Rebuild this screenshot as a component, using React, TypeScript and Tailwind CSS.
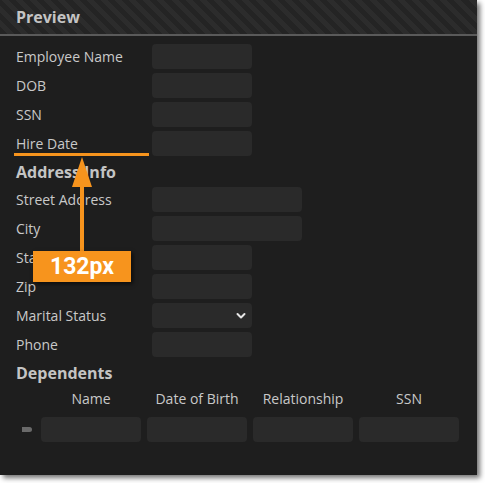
import React from "react";

const font = { fontFamily: '"Open Sans", "Noto Sans", sans-serif' };

function Field({ label, wide, select }: { label: string; wide?: boolean; select?: boolean }) {
  return (
    <div className="flex items-center h-[25px]">
      <div className="w-[136px] text-[14px] text-[#c9c9c9] leading-[20px]">{label}</div>
      <div
        className={`${wide ? "w-[150px]" : "w-[100px]"} h-[25px] rounded-[4px] bg-[#2a2a2a] flex items-center justify-end pr-[6px]`}
      >
        {select && (
          <svg width="10" height="8" viewBox="0 0 10 8">
            <path d="M1.5 2 L5 5.5 L8.5 2" fill="none" stroke="#e6e6e6" strokeWidth="2" strokeLinecap="round" strokeLinejoin="round" />
          </svg>
        )}
      </div>
    </div>
  );
}

export default function App() {
  return (
    <div className="w-[485px] h-[483px] bg-white relative" style={font}>
      <div className="w-[477px] h-[475px] bg-[#1e1e1e] shadow-[3px_3px_5px_rgba(0,0,0,0.55)] flex flex-col">
        <div className="h-[36px] bg-[repeating-linear-gradient(45deg,#242424_0px,#242424_5px,#2c2c2c_5px,#2c2c2c_10px)] border-b-[2px] border-[#5a5a5a] flex items-center px-[16px]">
          <span className="text-[16px] font-bold text-[#c4c4c4]">Preview</span>
        </div>
        <div className="flex flex-col px-[16px] pt-[8px] gap-[4px]">
          <Field label="Employee Name" />
          <Field label="DOB" />
          <Field label="SSN" />
          <Field label="Hire Date" />
          <div className="h-[23px] flex items-center text-[16px] font-bold text-[#c4c4c4]">Address Info</div>
          <Field label="Street Address" wide />
          <Field label="City" wide />
          <Field label="State" />
          <Field label="Zip" />
          <Field label="Marital Status" select />
          <Field label="Phone" />
          <div className="h-[23px] flex items-center text-[16px] font-bold text-[#c4c4c4]">Dependents</div>
          <div className="flex h-[20px] items-center">
            <div className="w-[25px]" />
            <div className="flex gap-[6px]">
              {["Name", "Date of Birth", "Relationship", "SSN"].map((h) => (
                <div key={h} className="w-[100px] text-center text-[14px] text-[#c9c9c9]">
                  {h}
                </div>
              ))}
            </div>
          </div>
          <div className="flex items-center h-[25px] mt-[5px]">
            <div className="w-[25px] flex items-center pl-[6px]">
              <div className="w-[10px] h-[5px] rounded-r-[3px] bg-[#6a6a6a]" />
            </div>
            <div className="flex gap-[6px]">
              {[0, 1, 2, 3].map((i) => (
                <div key={i} className="w-[100px] h-[25px] rounded-[4px] bg-[#2a2a2a]" />
              ))}
            </div>
          </div>
        </div>
      </div>

      {/* annotation overlay */}
      <div className="absolute left-[14px] top-[153px] w-[135px] h-[3px] bg-[#f7941d]" />
      <svg className="absolute left-[70px] top-[156px]" width="24" height="96" viewBox="0 0 24 96">
        <polygon points="12,1 22,31 2,31" fill="#f7941d" />
        <rect x="10" y="28" width="4" height="68" fill="#f7941d" />
      </svg>
      <div className="absolute left-[33px] top-[251px] w-[98px] h-[31px] bg-[#f7941d] shadow-[2px_2px_4px_rgba(0,0,0,0.6)] flex items-center justify-center">
        <span className="text-white font-bold text-[23px] leading-none" style={{ fontFamily: 'Roboto, "Open Sans", sans-serif' }}>
          132px
        </span>
      </div>
    </div>
  );
}
